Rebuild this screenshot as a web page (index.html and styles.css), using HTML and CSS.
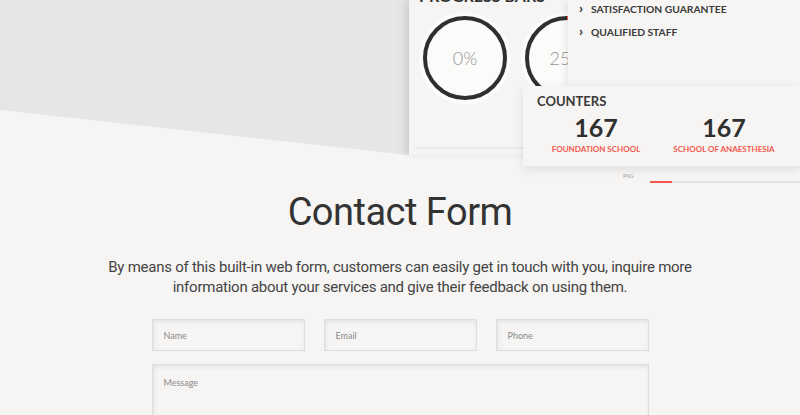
FILE: index.html
```html
<!DOCTYPE html>
<html lang="en">
<head>
	<meta charset="UTF-8">
	<title>Contact Form</title>
	<link rel="stylesheet" href="styles.css">
</head>
<body>
	<div class="showcase">
		<div class="shade"></div>
		<div class="card progress">
			<h3 class="card-title">Progress Bars</h3>
			<div class="rings">
				<div class="ring">
					<svg width="96" height="96" viewBox="0 0 96 96">
						<circle cx="48" cy="48" r="46" fill="#fbfbfa"/>
						<circle cx="48" cy="48" r="40" fill="none" stroke="#2f2f2f" stroke-width="4"/>
					</svg>
					<span>0%</span>
				</div>
				<div class="ring">
					<svg width="96" height="96" viewBox="0 0 96 96">
						<circle cx="48" cy="48" r="46" fill="#fbfbfa"/>
						<circle cx="48" cy="48" r="40" fill="none" stroke="#2f2f2f" stroke-width="4"/>
						<path d="M48 8 A40 40 0 0 1 88 48" fill="none" stroke="#f4584c" stroke-width="4"/>
					</svg>
					<span>25%</span>
				</div>
			</div>
		</div>
		<div class="card features">
			<ul>
				<li>Satisfaction Guarantee</li>
				<li>Qualified Staff</li>
			</ul>
		</div>
		<div class="card counters">
			<h4>Counters</h4>
			<div class="counter-grid">
				<div class="counter"><b>167</b><span>Foundation School</span></div>
				<div class="counter"><b>167</b><span>School of Anaesthesia</span></div>
			</div>
		</div>
		<div class="tag">PNG</div>
		<div class="track"><i></i></div>
	</div>

	<div class="contact">
		<h1>Contact Form</h1>
		<p>By means of this built-in web form, customers can easily get in touch with you, inquire more information about your services and give their feedback on using them.</p>
		<form class="form">
			<div class="row">
				<input type="text" placeholder="Name">
				<input type="text" placeholder="Email">
				<input type="text" placeholder="Phone">
			</div>
			<textarea placeholder="Message"></textarea>
		</form>
	</div>
</body>
</html>
```

FILE: styles.css
```css
*{
	box-sizing: border-box;
}
html,body{
	margin: 0;
	padding: 0;
	background: #f6f5f3;
	overflow: hidden;
}
body{
	width: 800px;
	height: 415px;
	font-family: Lato, "Open Sans", sans-serif;
	color: #333;
}
/* top collage */
.showcase{
	position: relative;
	height: 189px;
}
.shade{
	position: absolute;
	left: 0;
	top: 0;
	width: 409px;
	height: 155px;
	background: linear-gradient(90deg, #e6e6e6 0, #e6e6e6 396px, #dedede 409px);
	clip-path: polygon(0 0, 100% 0, 100% 100%, 0 110px);
}
.card{
	position: absolute;
	background: #f6f5f3;
}
.progress{
	left: 409px;
	top: 0;
	width: 391px;
	height: 155px;
	padding: 0 0 0 10px;
	box-shadow: -3px 0 6px rgba(0,0,0,0.07);
}
.card-title{
	margin: -14px 0 0;
	font-size: 16px;
	font-weight: 700;
	text-transform: uppercase;
	line-height: 20px;
}
.rings{
	display: flex;
	gap: 6px;
	margin: 4px 0 0 -2px;
	padding-bottom: 41px;
	border-bottom: 2px solid #e9e8e6;
	width: 160px;
}
.ring{
	position: relative;
	width: 96px;
	height: 96px;
}
.ring svg{
	display: block;
}
.ring span{
	position: absolute;
	left: 0;
	right: 0;
	top: 37px;
	text-align: center;
	font-size: 18px;
	font-weight: 300;
	color: #939393;
}
.features{
	left: 568px;
	top: 0;
	right: 0;
	height: 86px;
	box-shadow: -3px 2px 6px rgba(0,0,0,0.07);
}
.features ul{
	margin: 0;
	padding: 0 0 0 11px;
	list-style: none;
}
.features li{
	font-size: 10.3px;
	font-weight: 700;
	text-transform: uppercase;
	line-height: 21px;
	color: #3a3a3a;
}
.features li:first-child{
	margin-top: -3px;
}
.features li::before{
	content: "\203A";
	display: inline-block;
	width: 12px;
	font-size: 14px;
	font-weight: 900;
}
.counters{
	left: 523px;
	top: 86px;
	right: 0;
	height: 80px;
	padding: 7px 0 0 14px;
	box-shadow: 0 3px 10px rgba(0,0,0,0.1);
}
.counters h4{
	margin: 0;
	font-size: 13px;
	font-weight: 700;
	text-transform: uppercase;
	line-height: 16px;
	color: #3a3a3a;
}
.counter-grid{
	display: grid;
	grid-template-columns: 128px 128px;
	margin: 3px 0 0 -5px;
}
.counter{
	display: flex;
	flex-direction: column;
	align-items: center;
}
.counter b{
	font-size: 25px;
	line-height: 30px;
	font-weight: 700;
	color: #2f2f2f;
}
.counter span{
	font-size: 8px;
	font-weight: 700;
	text-transform: uppercase;
	color: #f4584c;
	margin-top: 2px;
}
.tag{
	position: absolute;
	left: 623px;
	top: 173px;
	font-size: 5px;
	color: #999;
}
.track{
	position: absolute;
	left: 650px;
	top: 181px;
	right: 0;
	height: 2px;
	background: #e4e3e1;
}
.track i{
	display: block;
	width: 22px;
	height: 2px;
	background: #f4584c;
}
/* contact */
.contact{
	text-align: center;
}
.contact h1{
	margin: 0;
	font-family: Roboto, sans-serif;
	font-weight: 400;
	font-size: 38px;
	line-height: 46px;
	color: #333;
	letter-spacing: -0.5px;
}
.contact p{
	width: 620px;
	margin: 22px auto 0;
	font-family: Roboto, sans-serif;
	font-size: 15px;
	line-height: 20px;
	letter-spacing: -0.25px;
	color: #444;
}
.form{
	width: 497px;
	margin: 22px auto 0;
}
.row{
	display: grid;
	grid-template-columns: repeat(3, 1fr);
	gap: 19px;
	margin-bottom: 13px;
}
input,textarea{
	display: block;
	width: 100%;
	height: 32px;
	padding: 0 11px;
	border: 1px solid #dedddb;
	background: #f6f5f3;
	box-shadow: inset 1px 2px 4px rgba(0,0,0,0.08);
	font-family: Lato, sans-serif;
	font-size: 9px;
	color: #333;
	outline: none;
}
textarea{
	height: 80px;
	padding-top: 12px;
	resize: none;
}
::placeholder{
	color: #8a8a8a;
}
```
